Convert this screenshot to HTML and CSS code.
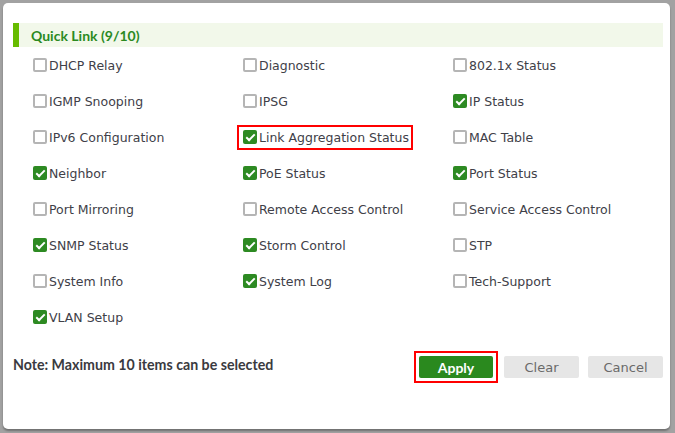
FILE: index.html
```html
<!DOCTYPE html>
<html>
<head>
<meta charset="utf-8">
<link rel="stylesheet" href="styles.css">
</head>
<body>
<div class="modal">
  <div class="header"><span class="title">Quick Link (9/10)</span></div>
  <div class="grid">
    <label class="item"><span class="cb"></span>DHCP Relay</label>
    <label class="item"><span class="cb"></span>Diagnostic</label>
    <label class="item"><span class="cb"></span>802.1x Status</label>
    <label class="item"><span class="cb"></span>IGMP Snooping</label>
    <label class="item"><span class="cb"></span>IPSG</label>
    <label class="item"><span class="cb on"></span>IP Status</label>
    <label class="item"><span class="cb"></span>IPv6 Configuration</label>
    <label class="item"><span class="hl"><span class="cb on"></span>Link Aggregation Status</span></label>
    <label class="item"><span class="cb"></span>MAC Table</label>
    <label class="item"><span class="cb on"></span>Neighbor</label>
    <label class="item"><span class="cb on"></span>PoE Status</label>
    <label class="item"><span class="cb on"></span>Port Status</label>
    <label class="item"><span class="cb"></span>Port Mirroring</label>
    <label class="item"><span class="cb"></span>Remote Access Control</label>
    <label class="item"><span class="cb"></span>Service Access Control</label>
    <label class="item"><span class="cb on"></span>SNMP Status</label>
    <label class="item"><span class="cb on"></span>Storm Control</label>
    <label class="item"><span class="cb"></span>STP</label>
    <label class="item"><span class="cb"></span>System Info</label>
    <label class="item"><span class="cb on"></span>System Log</label>
    <label class="item"><span class="cb"></span>Tech-Support</label>
    <label class="item"><span class="cb on"></span>VLAN Setup</label>
  </div>
  <div class="footer">
    <div class="note">Note: Maximum 10 items can be selected</div>
    <div class="buttons">
      <span class="hl-btn"><button class="btn apply">Apply</button></span>
      <button class="btn grey">Clear</button>
      <button class="btn grey">Cancel</button>
    </div>
  </div>
</div>
</body>
</html>
```
FILE: styles.css
```css
html, body {
  margin: 0;
  padding: 0;
}
body {
  background: #a2a2a2;
  width: 675px;
  height: 433px;
  padding: 3px 0 0 3px;
  box-sizing: border-box;
  font-family: "DejaVu Sans", sans-serif;
  overflow: hidden;
}
.modal {
  width: 667px;
  height: 426px;
  background: #fff;
  border-radius: 5px;
  box-shadow: 0 2px 2px rgba(0,0,0,0.3);
  box-sizing: border-box;
  padding: 20px 7px 0 10px;
}
.header {
  height: 24px;
  background: #f2f8ea;
  border-left: 6px solid #66bb00;
  display: flex;
  align-items: center;
  padding-left: 12px;
}
.title {
  color: #2b8a1f;
  font-family: Lato, sans-serif;
  font-weight: bold;
  font-size: 14px;
}
.grid {
  display: grid;
  grid-template-columns: 210px 210px 210px;
  grid-auto-rows: 36px;
  padding-left: 20px;
}
.item {
  display: flex;
  align-items: center;
  font-size: 12.5px;
  color: #404048;
  white-space: nowrap;
}
.cb {
  width: 14px;
  height: 14px;
  box-sizing: border-box;
  border: 2px solid #b5b5b5;
  border-radius: 2px;
  margin-right: 2px;
  flex: none;
  background: #fff;
}
.cb.on {
  border: none;
  background: #2d8a22;
  position: relative;
}
.cb.on::after {
  content: "";
  position: absolute;
  left: 5px;
  top: 2px;
  width: 3px;
  height: 7px;
  border: solid #fff;
  border-width: 0 2px 2px 0;
  transform: rotate(45deg);
}
.hl {
  display: flex;
  align-items: center;
  border: 2px solid #ff0000;
  padding: 3px 2px 3px 4px;
  margin-left: -6px;
}
.footer {
  display: flex;
  justify-content: space-between;
  align-items: center;
  margin-top: 16px;
}
.note {
  font-family: Lato, sans-serif;
  font-weight: bold;
  font-size: 14.2px;
  color: #3a3a40;
  padding-bottom: 6px;
}
.buttons {
  display: flex;
  align-items: center;
}
.hl-btn {
  border: 2px solid #ff0000;
  padding: 3px;
  display: flex;
  margin-right: 6px;
}
.btn {
  width: 75px;
  height: 22px;
  border: none;
  border-radius: 2px;
  font-family: "DejaVu Sans", sans-serif;
  font-size: 13px;
  padding: 0;
}
.apply {
  width: 74px;
  background: #2a891e;
  color: #fff;
  font-family: Lato, sans-serif;
  font-weight: bold;
  font-size: 14px;
}
.grey {
  background: #e6e6e6;
  color: #6a6a6a;
  margin-left: 9px;
}
.grey:first-of-type {
  margin-left: 0;
}
```
